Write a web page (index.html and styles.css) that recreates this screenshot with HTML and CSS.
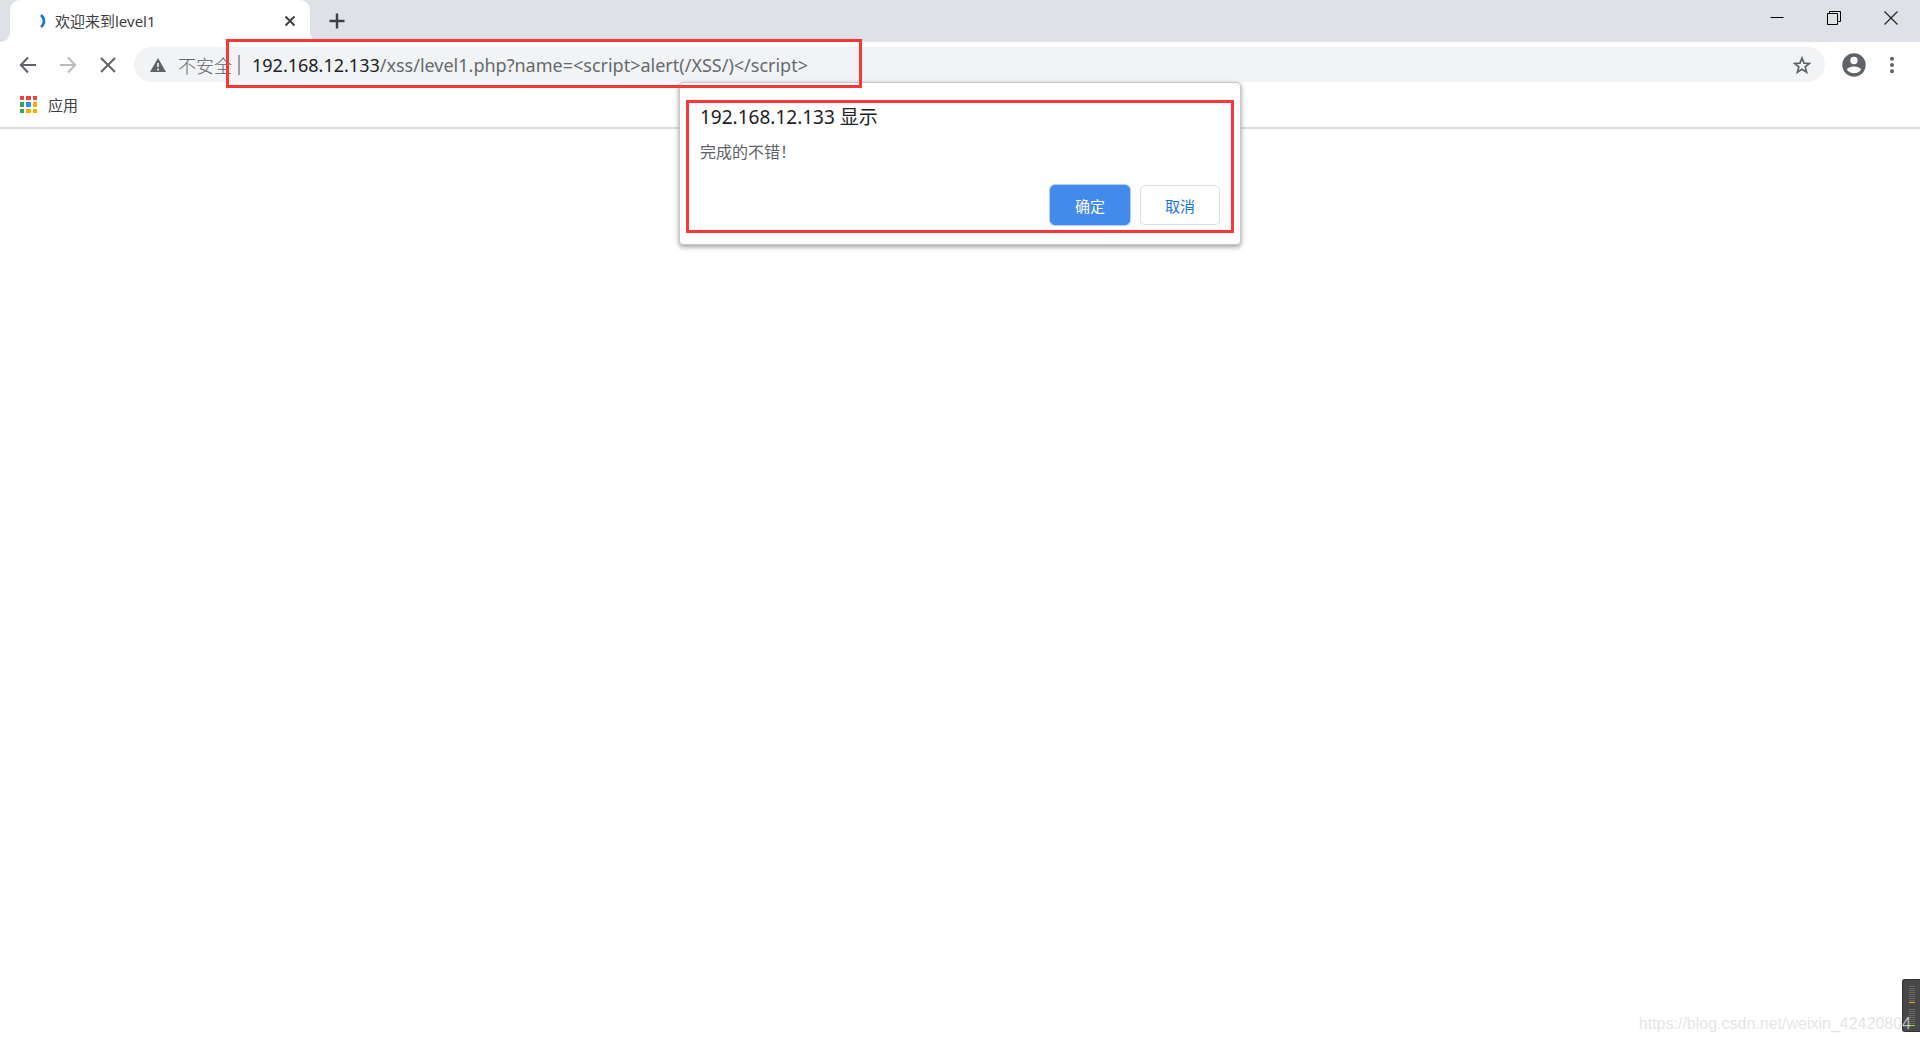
FILE: index.html
```html
<!DOCTYPE html>
<html lang="zh-CN">
<head>
<meta charset="utf-8">
<title>欢迎来到level1</title>
<link rel="stylesheet" href="styles.css">
</head>
<body>
<div class="window">
  <header class="titlebar">
    <div class="tab">
      <svg class="spinner" width="8" height="16" viewBox="0 0 8 16" aria-hidden="true"><path d="M2 2C6 5.500 6 10.500 2 14" fill="none" stroke="#1a73e8" stroke-width="2.600"/></svg>
      <span class="tab-title">欢迎来到level1</span>
      <button class="icon-button" type="button" aria-label="关闭标签页"><svg width="12" height="12" viewBox="0 0 12 12"><path d="M1.500 1.500l9 9M10.500 1.500l-9 9" stroke="#3c4043" stroke-width="2"/></svg></button>
    </div>
    <button class="icon-button new-tab" type="button" aria-label="新标签页"><svg width="16" height="16" viewBox="0 0 16 16"><path d="M8 .5v15M.5 8h15" stroke="#3c4043" stroke-width="2.400"/></svg></button>
    <div class="window-controls">
      <button class="icon-button" type="button" aria-label="最小化"><svg width="14" height="14" viewBox="0 0 14 14"><path d="M.5 6.500h13" stroke="#000"/></svg></button>
      <button class="icon-button" type="button" aria-label="还原"><svg width="14" height="14" viewBox="0 0 14 14"><path d="M.5 2.500h10v11H.5zM2.500 2.500v-2h11v10h-3" fill="none" stroke="#000"/></svg></button>
      <button class="icon-button" type="button" aria-label="关闭"><svg width="14" height="14" viewBox="0 0 14 14"><path d="M.5 .5l13 13M13.500 .5l-13 13" stroke="#222" stroke-width="1.200"/></svg></button>
    </div>
  </header>

  <nav class="toolbar">
    <div class="history">
      <button class="icon-button" type="button" aria-label="后退"><svg width="18" height="18" viewBox="0 0 18 18"><path d="M17 9H2.500M9 1.500L1.800 9 9 16.500" fill="none" stroke="#5f6368" stroke-width="2"/></svg></button>
      <button class="icon-button" type="button" aria-label="前进"><svg width="18" height="18" viewBox="0 0 18 18"><path d="M1 9h14.500M9 1.500L16.200 9 9 16.500" fill="none" stroke="#babcbe" stroke-width="2"/></svg></button>
      <button class="icon-button" type="button" aria-label="停止"><svg width="18" height="18" viewBox="0 0 18 18"><path d="M2 2l14 14M16 2L2 16" stroke="#5f6368" stroke-width="2"/></svg></button>
    </div>
    <div class="omnibox">
      <svg width="16" height="14" viewBox="0 0 16 14" aria-hidden="true"><path d="M8 0l8 14H0z" fill="#5f6368"/><path d="M8 5v4M8 10.500v2" stroke="#f1f3f4" stroke-width="1.600"/></svg>
      <span class="security">不安全</span>
      <span class="divider"></span>
      <label class="host" for="address">192.168.12.133</label>
      <input class="address" id="address" type="text" value="/xss/level1.php?name=&lt;script&gt;alert(/XSS/)&lt;/script&gt;">
      <button class="icon-button" type="button" aria-label="加入书签"><svg width="18" height="18" viewBox="0 0 18 18"><path d="M9 2l2 5.100 5.400.3-4.200 3.500 1.400 5.300L9 13.200l-4.600 3 1.400-5.300L1.600 7.400 7 7.100z" fill="none" stroke="#5f6368" stroke-width="1.700"/></svg></button>
    </div>
    <button class="icon-button" type="button" aria-label="用户"><svg width="24" height="24" viewBox="0 0 24 24"><circle cx="12" cy="12" r="11.700" fill="#5f6368"/><circle cx="12" cy="7.500" r="3.700" fill="#fff"/><path d="M4.800 16.600C7.500 12.300 16.500 12.300 19.200 16.600 16.500 21.400 7.500 21.400 4.800 16.600z" fill="#fff"/></svg></button>
    <button class="icon-button" type="button" aria-label="菜单"><svg width="18" height="18" viewBox="0 0 18 18" fill="#5f6368"><circle cx="9" cy="2.700" r="2"/><circle cx="9" cy="9" r="2"/><circle cx="9" cy="15.300" r="2"/></svg></button>
  </nav>

  <div class="bookmarks">
    <a class="apps" href="#"><svg width="17" height="17" viewBox="0 0 17 17" aria-hidden="true"><path d="M0 0h4v4H0zM6 0h5v4H6zM13 0h4v4h-4z" fill="#f44336"/><path d="M0 6h4v5H0zM0 13h4v4H0z" fill="#34a853"/><path d="M6 6h5v5H6z" fill="#2196f3"/><path d="M13 6h4v5h-4zM6 13h5v4H6zM13 13h4v4h-4z" fill="#f9ab00"/></svg>应用</a>
  </div>

  <main class="page"></main>

  <dialog class="prompt" open aria-labelledby="prompt-title">
    <h1 class="prompt-title" id="prompt-title">192.168.12.133 显示</h1>
    <p class="prompt-text">完成的不错！</p>
    <div class="prompt-actions">
      <button class="button primary" type="button">确定</button>
      <button class="button" type="button">取消</button>
    </div>
    <div class="mark mark-prompt"></div>
  </dialog>
  <div class="mark mark-address"></div>

  <aside class="meter" aria-hidden="true">
    <div class="level warm"></div>
    <div class="level cool"></div>
  </aside>
  <div class="watermark">https://blog.csdn.net/weixin_42420804</div>
</div>
</body>
</html>
```
FILE: styles.css
```css
* {
  box-sizing: border-box;
}

body {
  margin: 0;
  background: #fff;
  color: #3c4043;
  font-family: "Noto Sans", "Noto Sans CJK SC", sans-serif;
  font-size: 15px;
}

.window {
  position: relative;
  display: flex;
  flex-direction: column;
  min-height: 100vh;
  overflow: hidden;
}

.icon-button {
  display: flex;
  align-items: center;
  justify-content: center;
  flex: none;
  padding: 0;
  border: 0;
  background: none;
}

.titlebar {
  display: flex;
  height: 42px;
  padding: 0 1px 0 10px;
  background: #dee1e6;
}

.tab {
  position: relative;
  display: flex;
  align-items: center;
  width: 300px;
  padding: 0 14px 0 29px;
  border-radius: 10px 10px 0 0;
  background: #fff;
}

.tab::before,
.tab::after {
  content: "";
  position: absolute;
  bottom: 0;
  width: 10px;
  height: 10px;
}

.tab::before {
  right: 100%;
  background: radial-gradient(circle at 0 0, #dee1e6 10px, #fff 10px);
}

.tab::after {
  left: 100%;
  background: radial-gradient(circle at 100% 0, #dee1e6 10px, #fff 10px);
}

.spinner {
  flex: none;
  margin-right: 8px;
}

.tab-title {
  flex: 1;
  font-size: 15px;
  line-height: 20px;
}

.new-tab {
  width: 54px;
}

.window-controls {
  display: flex;
  height: 36px;
  margin-left: auto;
}

.window-controls .icon-button {
  width: 57px;
}

.toolbar {
  display: flex;
  align-items: center;
  gap: 17px;
  height: 45px;
  padding: 0 19px;
}

.history {
  display: flex;
  gap: 22px;
}

.omnibox {
  display: flex;
  align-items: center;
  flex: 1;
  height: 35px;
  padding: 0 14px 0 16px;
  border-radius: 18px;
  background: #f1f3f4;
  color: #66696d;
  font-size: 18px;
}

.security {
  margin-left: 12px;
  color: #5f6368;
  font-family: "Noto Sans CJK SC", sans-serif;
  font-weight: 300;
}

.divider {
  width: 2px;
  height: 20px;
  margin: 0 12px 0 6px;
  background: #9aa0a6;
}

.host {
  color: #202124;
}

.address {
  flex: 1;
  min-width: 0;
  padding: 0;
  border: 0;
  outline: 0;
  background: none;
  color: inherit;
  font: inherit;
}

.bookmarks {
  display: flex;
  align-items: center;
  height: 42px;
  padding: 0 20px 5px;
  border-bottom: 2px solid #dadce0;
}

.apps {
  display: flex;
  align-items: center;
  gap: 11px;
  color: inherit;
  text-decoration: none;
}

.page {
  flex: 1;
}

.prompt {
  position: absolute;
  top: 82px;
  width: 562px;
  height: 163px;
  margin: 0 auto;
  padding: 20px;
  border: 1px solid #c8c8c8;
  border-radius: 4px;
  background: #fff;
  box-shadow: 0 2px 5px rgba(0, 0, 0, 0.4);
}

.prompt-title {
  margin: 0 0 8px;
  color: #202124;
  font-size: 19px;
  font-weight: 400;
  line-height: 28px;
}

.prompt-text {
  margin: 0 0 20px;
  color: #5f6368;
  font-size: 16px;
  line-height: 26px;
}

.prompt-actions {
  display: flex;
  justify-content: flex-end;
  gap: 10px;
}

.button {
  width: 80px;
  height: 40px;
  border: 1px solid #dadce0;
  border-radius: 5px;
  background: #fff;
  color: #1a73e8;
  font-family: inherit;
  font-size: 15px;
}

.primary {
  border-color: #428bec;
  background: #428bec;
  box-shadow: 0 0 0 1px #b3d0f8;
  color: #fff;
}

.mark {
  position: absolute;
  border: 3px solid #fc3636;
  pointer-events: none;
}

.mark-prompt {
  inset: 17px 6px 11px;
}

.mark-address {
  top: 39px;
  left: 226px;
  width: 636px;
  height: 49px;
}

.meter {
  position: absolute;
  right: 0;
  bottom: 10px;
  display: flex;
  flex-direction: column;
  gap: 6px;
  width: 18px;
  padding: 6px 6px 5px;
  border: 1px solid #333;
  border-right: 0;
  border-radius: 3px 0 0 3px;
  background: #484848;
}

.level {
  width: 6px;
  height: 17px;
  border-bottom: 1px solid;
  background: repeating-linear-gradient(#666 0 1px, #484848 1px 2px);
}

.warm {
  border-color: #ffa51f;
}

.cool {
  border-color: #7fe03a;
}

.watermark {
  position: absolute;
  right: 9px;
  bottom: 9px;
  color: rgba(222, 222, 222, 0.8);
  font-family: "Liberation Sans", sans-serif;
  font-size: 16px;
  line-height: 18px;
}
```
